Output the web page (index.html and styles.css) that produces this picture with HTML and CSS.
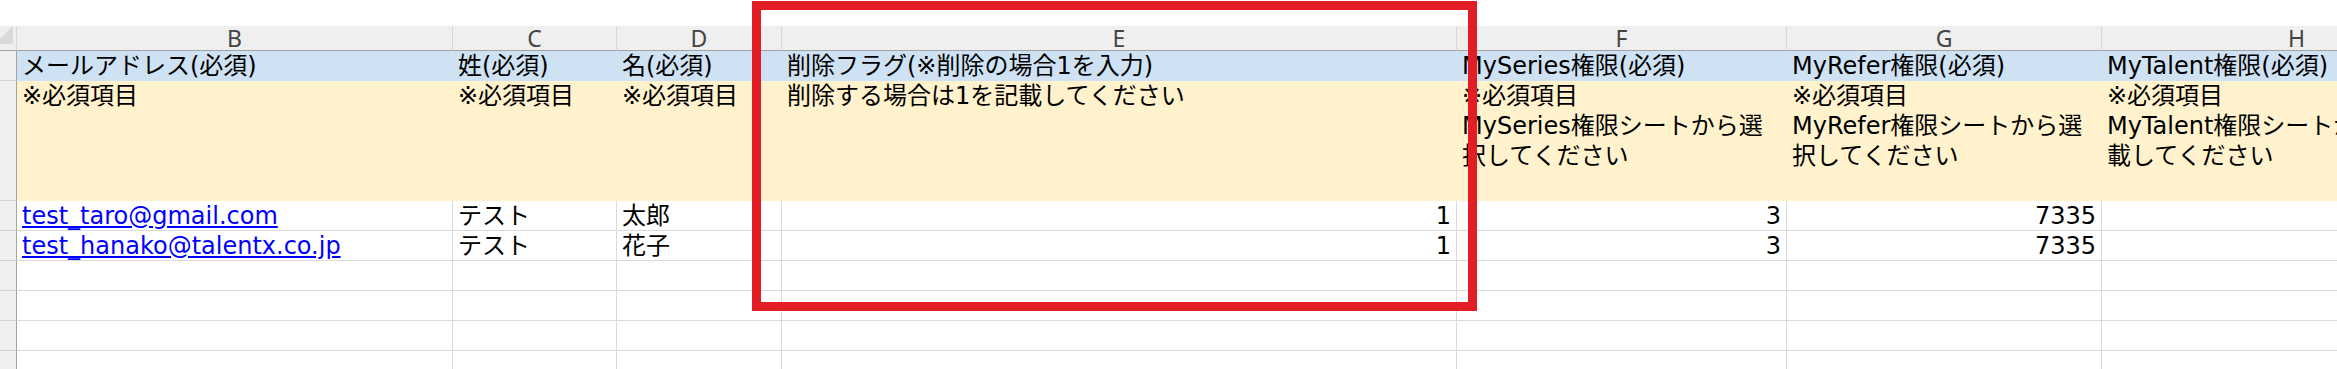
FILE: index.html
```html
<!DOCTYPE html>
<html lang="ja">
<head>
<meta charset="utf-8">
<title>Sheet</title>
<link rel="stylesheet" href="styles.css">
</head>
<body>
<div class="page">
  <div class="sheet">
    <div class="corner"><svg class="corner-tri" width="14" height="19" viewBox="0 0 14 19"><polygon points="13,0 13,18 0,18 0,13" fill="#d9d9d9"/></svg></div>
    <div class="ch">B</div>
    <div class="ch">C</div>
    <div class="ch">D</div>
    <div class="ch">E</div>
    <div class="ch">F</div>
    <div class="ch">G</div>
    <div class="ch">H</div>

    <div class="rh"></div>
    <div class="c hd">メールアドレス(必須)</div>
    <div class="c hd">姓(必須)</div>
    <div class="c hd">名(必須)</div>
    <div class="c hd">削除フラグ(※削除の場合1を入力)</div>
    <div class="c hd">MySeries権限(必須)</div>
    <div class="c hd">MyRefer権限(必須)</div>
    <div class="c hd">MyTalent権限(必須)</div>

    <div class="rh"></div>
    <div class="c note">※必須項目</div>
    <div class="c note">※必須項目</div>
    <div class="c note">※必須項目</div>
    <div class="c note">削除する場合は1を記載してください</div>
    <div class="c note">※必須項目<br>MySeries権限シートから選<br>択してください</div>
    <div class="c note">※必須項目<br>MyRefer権限シートから選<br>択してください</div>
    <div class="c note">※必須項目<br>MyTalent権限シートから記<br>載してください</div>

    <div class="rh"></div>
    <div class="c d"><a class="link" href="#">test_taro@gmail.com</a></div>
    <div class="c d">テスト</div>
    <div class="c d">太郎</div>
    <div class="c d num">1</div>
    <div class="c d num">3</div>
    <div class="c d num">7335</div>
    <div class="c d"></div>

    <div class="rh"></div>
    <div class="c d"><a class="link" href="#">test_hanako@talentx.co.jp</a></div>
    <div class="c d">テスト</div>
    <div class="c d">花子</div>
    <div class="c d num">1</div>
    <div class="c d num">3</div>
    <div class="c d num">7335</div>
    <div class="c d"></div>

    <div class="rh"></div>
    <div class="c d"></div><div class="c d"></div><div class="c d"></div><div class="c d"></div><div class="c d"></div><div class="c d"></div><div class="c d"></div>
    <div class="rh"></div>
    <div class="c d"></div><div class="c d"></div><div class="c d"></div><div class="c d"></div><div class="c d"></div><div class="c d"></div><div class="c d"></div>
    <div class="rh"></div>
    <div class="c d"></div><div class="c d"></div><div class="c d"></div><div class="c d"></div><div class="c d"></div><div class="c d"></div><div class="c d"></div>
    <div class="rh"></div>
    <div class="c d"></div><div class="c d"></div><div class="c d"></div><div class="c d"></div><div class="c d"></div><div class="c d"></div><div class="c d"></div>
  </div>
  <div class="highlight"></div>
</div>
</body>
</html>
```

FILE: styles.css
```css
html, body {
  margin: 0;
  padding: 0;
  background: #ffffff;
}
body {
  width: 2337px;
  height: 369px;
  overflow: hidden;
}
.page {
  position: relative;
  padding-top: 26px;
}
.sheet {
  display: grid;
  grid-template-columns: 17px 436px 164px 165px 675px 330px 315px 390px;
  grid-template-rows: 25px 30px 120px repeat(6, 30px);
  width: 2492px;
  font-family: "DejaVu Sans", "Noto Sans CJK JP", sans-serif;
  font-size: 24px;
  color: #000;
}
.sheet > div {
  box-sizing: border-box;
  min-width: 0;
}
.corner {
  background: #efefef;
  border-bottom: 1px solid #a3a3a3;
  border-right: 1px solid #d6d6d6;
  display: flex;
  align-items: flex-end;
  justify-content: flex-start;
  padding-bottom: 5px;
}
.corner-tri {
  display: block;
}
.ch {
  background: #efefef;
  border-right: 1px solid #d6d6d6;
  border-bottom: 1px solid #a3a3a3;
  font-family: "Noto Sans", "DejaVu Sans", sans-serif;
  font-size: 23px;
  color: #444444;
  display: flex;
  align-items: center;
  justify-content: center;
  line-height: 24px;
}
.rh {
  background: #efefef;
  border-right: 1px solid #a3a3a3;
  border-bottom: 1px solid #d4d4d4;
}
.c {
  padding: 0 5px;
  line-height: 30px;
  white-space: nowrap;
  overflow: hidden;
}
.hd {
  background: #cfe2f3;
}
.note {
  background: #fff2cc;
}
.d {
  background: #ffffff;
  border-right: 1px solid #dadada;
  border-bottom: 1px solid #dadada;
}
.num {
  text-align: right;
}
.link {
  color: #0000ff;
  text-decoration: underline;
}
.highlight {
  position: absolute;
  left: 752px;
  top: 1px;
  width: 725px;
  height: 310px;
  box-sizing: border-box;
  border: 9px solid #e31d24;
}
```
